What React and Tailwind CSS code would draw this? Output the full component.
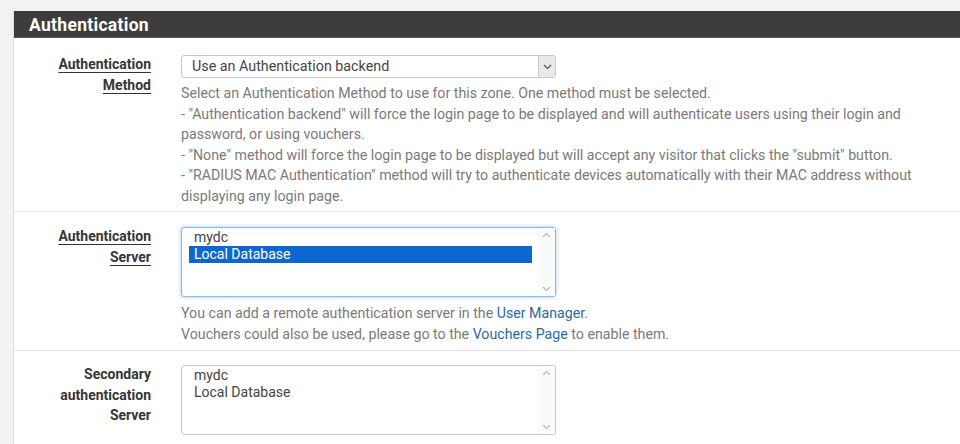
import React from 'react';

const font = { fontFamily: 'Roboto, "Noto Sans", Arial, sans-serif' };

function Chevron({ up }) {
  return (
    <svg width="9" height="6" viewBox="0 0 9 6" className="block">
      <path d={up ? 'M1 5 L4.5 1.5 L8 5' : 'M1 1 L4.5 4.5 L8 1'} fill="none" stroke="currentColor" strokeWidth="1.2" />
    </svg>
  );
}

function ListBox({ items, selected, focused }) {
  return (
    <div
      className={`flex w-[375px] h-[70px] rounded-[3px] bg-white border ${
        focused ? 'border-[#8ab8e6] shadow-[0_0_4px_rgba(102,175,233,0.6)]' : 'border-[#c8c8c8]'
      }`}
    >
      <div className="flex-1 pt-[1px] pl-[7px] pr-[6px]">
        {items.map(it => (
          <div
            key={it}
            className={`h-[17px] leading-[17px] text-[14px] pl-[5px] ${
              it === selected ? 'bg-[#0c68cf] text-white' : 'text-[#444]'
            }`}
          >
            {it}
          </div>
        ))}
      </div>
      <div className="w-[17px] flex flex-col justify-between items-center py-[4px] text-[#b8b8b8] bg-[#fafafa]">
        <Chevron up />
        <Chevron />
      </div>
    </div>
  );
}

function Label({ children, underline = true }) {
  return (
    <div className="w-[152px] shrink-0 pr-[15px] text-right font-bold text-[14px] leading-[20.5px] text-[#363636] -mt-[1px]">
      {underline ? (
        <span className="underline decoration-[#333] underline-offset-[3px] decoration-1">{children}</span>
      ) : (
        children
      )}
    </div>
  );
}

function Help({ children, className = '' }) {
  return <div className={`text-[14.2px] leading-[20.5px] text-[#7a7a7a] ${className}`}>{children}</div>;
}

export default function App() {
  return (
    <div className="w-[960px] h-[444px] overflow-hidden bg-[#f2f2f2] pt-[11px] pl-[13px]" style={font}>
      <div className="bg-white border-l border-[#dedede] h-full">
        <div className="h-[27px] bg-[#3d3d3d] border-b border-[#555] flex items-center pl-[15px] pt-[3px]">
          <h2 className="text-white font-bold text-[17.5px] tracking-[0.3px]">Authentication</h2>
        </div>

        <div className="flex pt-[17px] pb-[5px] border-b border-[#e3e3e3]">
          <Label>
            Authentication
            <br />
            Method
          </Label>
          <div className="pl-[15px]">
            <div className="flex w-[375px] h-[23px] border border-[#c8c8c8] rounded-[3px] bg-white">
              <div className="flex-1 pl-[10px] text-[14.3px] leading-[21px] text-[#444]">Use an Authentication backend</div>
              <div className="w-[17px] bg-[#e9e9e9] border-l border-[#c8c8c8] flex items-center justify-center text-[#555]">
                <Chevron />
              </div>
            </div>
            <Help className="mt-[5px] whitespace-nowrap">
              Select an Authentication Method to use for this zone. One method must be selected.
              <br />
              - "Authentication backend" will force the login page to be displayed and will authenticate users using their login and
              <br />
              password, or using vouchers.
              <br />
              - "None" method will force the login page to be displayed but will accept any visitor that clicks the "submit" button.
              <br />
              - "RADIUS MAC Authentication" method will try to authenticate devices automatically with their MAC address without
              <br />
              displaying any login page.
            </Help>
          </div>
        </div>

        <div className="flex pt-[15px] pb-[6px] border-b border-[#e3e3e3]">
          <Label>
            Authentication
            <br />
            Server
          </Label>
          <div className="pl-[15px]">
            <ListBox items={['mydc', 'Local Database']} selected="Local Database" focused />
            <Help className="mt-[6px] whitespace-nowrap">
              You can add a remote authentication server in the <a className="text-[#2a6aa3]">User Manager</a>.
              <br />
              Vouchers could also be used, please go to the <a className="text-[#2a6aa3]">Vouchers Page</a> to enable them.
            </Help>
          </div>
        </div>

        <div className="flex pt-[14px]">
          <Label underline={false}>
            Secondary
            <br />
            authentication
            <br />
            Server
          </Label>
          <div className="pl-[15px]">
            <ListBox items={['mydc', 'Local Database']} />
          </div>
        </div>
      </div>
    </div>
  );
}
